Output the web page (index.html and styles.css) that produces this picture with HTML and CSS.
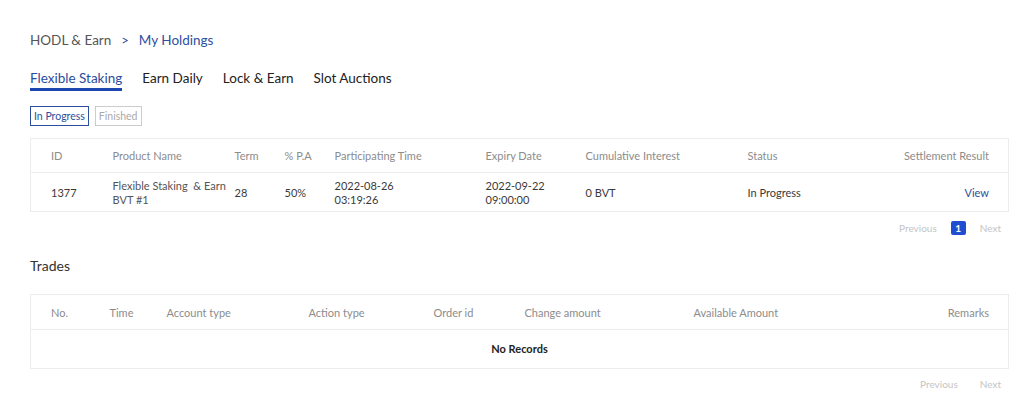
FILE: index.html
```html
<!DOCTYPE html>
<html lang="en">
<head>
    <meta charset="UTF-8">
    <meta name="viewport" content="width=device-width, initial-scale=1.0">
    <title>My Holdings</title>
    <link rel="stylesheet" href="styles.css">
</head>
<body>
    <div class="page">
        <div class="crumbs">
            <span>HODL &amp; Earn</span>
            <span class="sep">&gt;</span>
            <span class="current">My Holdings</span>
        </div>

        <div class="tabs">
            <span class="tab active">Flexible Staking</span>
            <span class="tab">Earn Daily</span>
            <span class="tab">Lock &amp; Earn</span>
            <span class="tab">Slot Auctions</span>
        </div>

        <div class="filters">
            <span class="chip on">In Progress</span>
            <span class="chip">Finished</span>
        </div>

        <table class="grid holdings">
            <colgroup>
                <col style="width:82px"><col style="width:122px"><col style="width:50px">
                <col style="width:50px"><col style="width:151px"><col style="width:100px">
                <col style="width:162px"><col style="width:133px"><col>
            </colgroup>
            <thead>
                <tr>
                    <th>ID</th>
                    <th>Product Name</th>
                    <th>Term</th>
                    <th>% P.A</th>
                    <th>Participating Time</th>
                    <th>Expiry Date</th>
                    <th>Cumulative Interest</th>
                    <th>Status</th>
                    <th class="right">Settlement Result</th>
                </tr>
            </thead>
            <tbody>
                <tr>
                    <td>1377</td>
                    <td class="name">Flexible Staking &nbsp;&amp; Earn BVT #1</td>
                    <td>28</td>
                    <td>50%</td>
                    <td>2022-08-26<br>03:19:26</td>
                    <td>2022-09-22<br>09:00:00</td>
                    <td>0 BVT</td>
                    <td>In Progress</td>
                    <td class="right"><a class="link" href="#">View</a></td>
                </tr>
            </tbody>
        </table>

        <div class="pager first">
            <span>Previous</span>
            <span class="num">1</span>
            <span>Next</span>
        </div>

        <h3 class="title">Trades</h3>

        <table class="grid trades">
            <colgroup>
                <col style="width:79px"><col style="width:57px"><col style="width:142px">
                <col style="width:125px"><col style="width:91px"><col style="width:169px">
                <col style="width:200px"><col>
            </colgroup>
            <thead>
                <tr>
                    <th>No.</th>
                    <th>Time</th>
                    <th>Account type</th>
                    <th>Action type</th>
                    <th>Order id</th>
                    <th>Change amount</th>
                    <th>Available Amount</th>
                    <th class="right">Remarks</th>
                </tr>
            </thead>
            <tbody>
                <tr>
                    <td colspan="8" class="empty">No Records</td>
                </tr>
            </tbody>
        </table>

        <div class="pager wide">
            <span>Previous</span>
            <span>Next</span>
        </div>
    </div>
</body>
</html>
```

FILE: styles.css
```css
*{
    margin: 0;
    padding: 0;
    box-sizing: border-box;
    font-family: Lato, "Noto Sans", Arial, sans-serif;
}
body{
    background-color: #fff;
    color: #333;
}
.page{
    width: 979px;
    margin-left: 30px;
    padding-top: 30px;
}
.crumbs{
    display: flex;
    align-items: center;
    gap: 10px;
    height: 20px;
    font-size: 13.5px;
    color: #555;
}
.crumbs .sep{
    color: #2d4f9e;
    font-size: 13px;
}
.crumbs .current{
    color: #2d4f9e;
}
.tabs{
    display: flex;
    gap: 20px;
    margin-top: 17px;
    height: 24px;
    font-size: 13.5px;
    color: #222;
}
.tab{
    line-height: 22px;
}
.tab.active{
    color: #2a4c9c;
    border-bottom: 3px solid #1c47b0;
}
.filters{
    display: flex;
    gap: 6px;
    margin-top: 15px;
}
.chip{
    height: 20px;
    line-height: 18px;
    padding: 0 3px;
    font-size: 10.5px;
    color: #aaa;
    border: 1px solid #ccc;
}
.chip.on{
    color: #2d4f9e;
    border-color: #2d4f9e;
}
.grid{
    width: 979px;
    border-collapse: collapse;
    table-layout: fixed;
    border: 1px solid #ececec;
    font-size: 11px;
}
.holdings{
    margin-top: 12px;
}
.grid th{
    height: 34px;
    text-align: left;
    font-weight: normal;
    color: #8c8c8c;
    border-bottom: 1px solid #ececec;
}
.grid td{
    height: 39px;
    padding-top: 2px;
    color: #3a3a3a;
    line-height: 14px;
}
.grid th:first-child,
.grid td:first-child{
    padding-left: 20px;
}
.grid .right{
    text-align: right;
    padding-right: 19px;
}
.grid td.name{
    color: #555;
    padding-right: 6px;
}
.link{
    color: #2d4f9e;
    text-decoration: none;
}
.pager{
    display: flex;
    justify-content: flex-end;
    align-items: center;
    gap: 14px;
    height: 30px;
    padding-right: 8px;
    font-size: 10px;
    color: #c4c4c4;
}
.pager.first{
    margin-top: 1px;
}
.pager.wide{
    gap: 22px;
}
.pager .num{
    width: 15px;
    height: 14px;
    line-height: 14px;
    text-align: center;
    border-radius: 2px;
    background-color: #1f4fd0;
    color: #fff;
    font-weight: bold;
}
.title{
    margin-top: 13px;
    font-size: 14px;
    font-weight: normal;
    color: #333;
    line-height: 20px;
}
.trades{
    margin-top: 18px;
}
.trades th{
    height: 35px;
}
.grid td.empty{
    height: 39px;
    padding-top: 0;
    text-align: center;
    color: #222;
    font-weight: bold;
    padding-left: 0;
}
```
